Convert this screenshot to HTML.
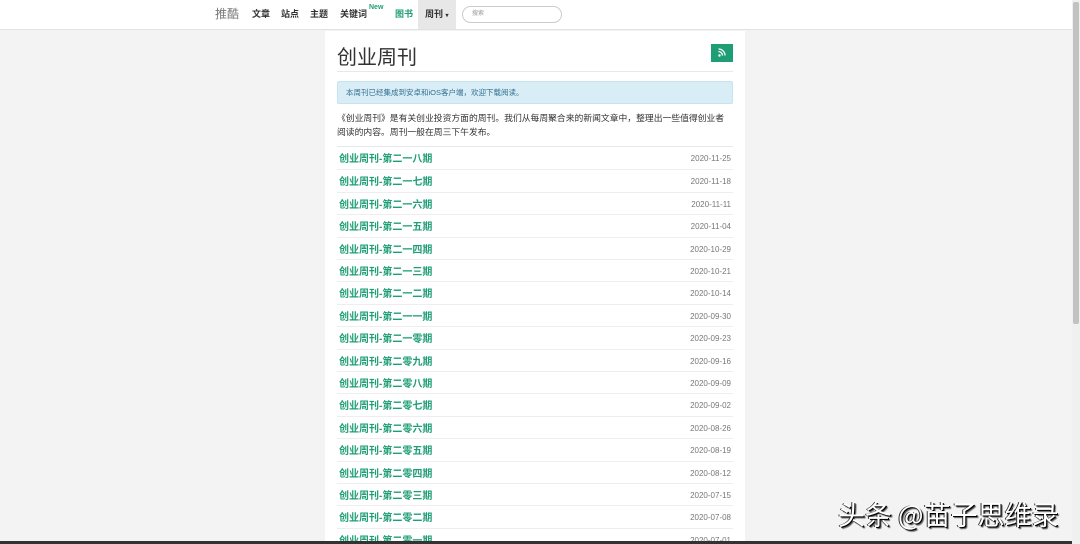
<!DOCTYPE html>
<html><head><meta charset="utf-8"><style>
*{margin:0;padding:0;box-sizing:border-box}
html,body{width:1080px;height:544px;overflow:hidden}
body{background:#f3f3f3;font-family:"Liberation Sans","Noto Sans CJK SC",sans-serif;position:relative}
.nav{position:absolute;left:0;top:0;width:1072px;height:30px;background:#fff;border-bottom:1px solid #e2e2e2}
.nav span{position:absolute;top:0;line-height:29px;font-size:9px;font-weight:bold;color:#333}
.box{position:absolute;left:325px;top:31px;width:420px;height:513px;background:#fff}
h1{position:absolute;left:12px;top:14px;font-size:20px;font-weight:normal;color:#333;line-height:26px}
.hr{position:absolute;left:12px;width:396px;height:1px;background:#e8e8e8}
.rss{position:absolute;left:386px;top:13px;width:22px;height:18px;background:#1f9e76}
.alert{position:absolute;left:12px;top:50px;width:396px;height:23px;background:#d9edf7;border:1px solid #c6e3ef;border-radius:2px;font-size:7.5px;color:#31708f;line-height:21px;padding-left:8px}
.p{position:absolute;left:12px;top:80px;width:400px;font-size:8.8px;color:#333;line-height:14px}
.row{position:absolute;left:12px;width:396px;height:22.4px;border-top:1px solid #eee}
.row a{position:absolute;left:2px;top:2px;line-height:21px;font-size:10px;font-weight:bold;color:#1f9e76;text-decoration:none}
.row i{position:absolute;right:2px;top:1px;line-height:22px;font-size:8px;font-style:normal;color:#777}
.sb{position:absolute;right:0;top:0;width:8px;height:544px;background:#f0f0f0}
.sb div{position:absolute;left:1px;top:2px;width:6px;height:322px;background:#c2c2c2;border-radius:2px}
.wm{position:absolute;left:838px;top:496px;font-size:27px;line-height:36px;color:#fff;text-shadow:1px 1px 0 #000,-1px 0 0 #333,2px 2px 1px #555;font-family:"Noto Sans CJK SC",sans-serif;white-space:nowrap}
</style></head><body>
<div class="nav">
<span style="left:215px;font-size:12px;font-weight:normal;color:#777">推酷</span>
<span style="left:252px">文章</span><span style="left:281px">站点</span><span style="left:310px">主题</span>
<span style="left:340px">关键词</span><span style="left:369px;top:-7px;font-size:7px;color:#1f9e76">New</span>
<span style="left:395px;color:#1f9e76">图书</span>
<span style="left:418px;width:38px;height:29px;background:#e7e7e7;padding-left:7px">周刊 <small style="font-size:6px">▾</small></span>
<div style="position:absolute;left:462px;top:6px;width:100px;height:17px;border:1px solid #ccc;border-radius:9px;font-size:6px;color:#999;line-height:15px;padding-left:9px">搜索</div>
</div>
<div class="box">
<h1>创业周刊</h1>
<div class="rss"><svg width="22" height="18" viewBox="0 0 22 18"><circle cx="8.5" cy="11.5" r="1.2" fill="#fff"/><path d="M7.5 7.5a4 4 0 0 1 4 4M7.5 5a6.5 6.5 0 0 1 6.5 6.5" stroke="#fff" stroke-width="1.3" fill="none"/></svg></div>
<div class="hr" style="top:40px"></div>
<div class="alert">本周刊已经集成到安卓和iOS客户端，欢迎下载阅读。</div>
<div class="p">《创业周刊》是有关创业投资方面的周刊。我们从每周聚合来的新闻文章中，整理出一些值得创业者<br>阅读的内容。周刊一般在周三下午发布。</div>
<div class="hr" style="top:115px"></div>
<div class="row" style="top:116px;border-top:none"><a>创业周刊-第二一八期</a><i>2020-11-25</i></div>
<div class="row" style="top:138.4px"><a>创业周刊-第二一七期</a><i>2020-11-18</i></div>
<div class="row" style="top:160.8px"><a>创业周刊-第二一六期</a><i>2020-11-11</i></div>
<div class="row" style="top:183.2px"><a>创业周刊-第二一五期</a><i>2020-11-04</i></div>
<div class="row" style="top:205.6px"><a>创业周刊-第二一四期</a><i>2020-10-29</i></div>
<div class="row" style="top:228px"><a>创业周刊-第二一三期</a><i>2020-10-21</i></div>
<div class="row" style="top:250.4px"><a>创业周刊-第二一二期</a><i>2020-10-14</i></div>
<div class="row" style="top:272.8px"><a>创业周刊-第二一一期</a><i>2020-09-30</i></div>
<div class="row" style="top:295.2px"><a>创业周刊-第二一零期</a><i>2020-09-23</i></div>
<div class="row" style="top:317.6px"><a>创业周刊-第二零九期</a><i>2020-09-16</i></div>
<div class="row" style="top:340px"><a>创业周刊-第二零八期</a><i>2020-09-09</i></div>
<div class="row" style="top:362.4px"><a>创业周刊-第二零七期</a><i>2020-09-02</i></div>
<div class="row" style="top:384.8px"><a>创业周刊-第二零六期</a><i>2020-08-26</i></div>
<div class="row" style="top:407.2px"><a>创业周刊-第二零五期</a><i>2020-08-19</i></div>
<div class="row" style="top:429.6px"><a>创业周刊-第二零四期</a><i>2020-08-12</i></div>
<div class="row" style="top:452px"><a>创业周刊-第二零三期</a><i>2020-07-15</i></div>
<div class="row" style="top:474.4px"><a>创业周刊-第二零二期</a><i>2020-07-08</i></div>
<div class="row" style="top:496.8px"><a>创业周刊-第二零一期</a><i>2020-07-01</i></div>
</div>
<div class="sb"><div></div></div>
<div style="position:absolute;left:0;top:541px;width:1072px;height:3px;background:#333"></div>
<div class="wm">头条 @苗子思维录</div>
</body></html>
